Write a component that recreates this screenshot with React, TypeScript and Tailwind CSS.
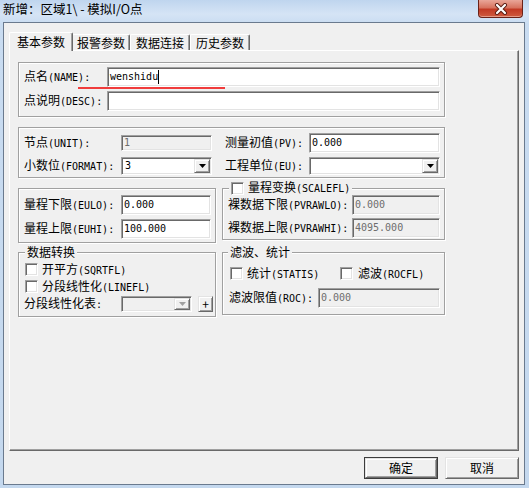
import { clsx as cn } from 'clsx';
import type { ReactNode } from 'react';

const sunken =
  'border border-t-[#a0a0a0] border-l-[#a0a0a0] border-r-white border-b-white shadow-[inset_1px_1px_0_#696969,inset_-1px_-1px_0_#e3e3e3]';
const raised =
  'border border-t-[#e3e3e3] border-l-[#e3e3e3] border-r-[#696969] border-b-[#696969] shadow-[inset_1px_1px_0_#fff,inset_-1px_-1px_0_#a0a0a0]';
const mono = "font-['DejaVu_Sans_Mono',monospace] text-[10px]";

function Label({ zh, en, className }: { zh: string; en: string; className?: string }) {
  return (
    <span className={cn('shrink-0 whitespace-nowrap leading-[16px]', className)}>
      {zh}
      <span className={mono}>{en}</span>
    </span>
  );
}

interface FieldProps {
  value?: string;
  disabled?: boolean;
  caret?: boolean;
  className?: string;
}

function Field({ value = '', disabled, caret, className }: FieldProps) {
  return (
    <div
      className={cn(
        sunken,
        'flex shrink-0 items-center overflow-hidden pl-[2px]',
        disabled ? 'bg-[#f0f0f0] text-[#6d6d6d]' : 'bg-white text-black',
        className
      )}
    >
      <span className={cn(mono, 'leading-[14px]')}>{value}</span>
      {caret && <span className="inline-block h-[14px] w-px bg-black" />}
    </div>
  );
}

function Combo({ value = '', disabled, className }: FieldProps) {
  return (
    <div className={cn(sunken, 'flex shrink-0 p-[1px]', disabled ? 'bg-[#f0f0f0]' : 'bg-white', className)}>
      <div className={cn(mono, 'flex flex-1 items-center pl-[2px] leading-[14px]')}>{value}</div>
      <div className={cn(raised, 'flex w-[16px] items-center justify-center bg-[#f0f0f0]')}>
        <svg width="7" height="4" viewBox="0 0 7 4">
          <path d="M0 0h7L3.5 4z" fill={disabled ? '#a0a0a0' : '#000'} />
        </svg>
      </div>
    </div>
  );
}

function Check() {
  return <span className={cn(sunken, 'inline-block h-[13px] w-[13px] shrink-0 bg-white')} />;
}

function Group({ legend, className, children }: { legend?: ReactNode; className?: string; children: ReactNode }) {
  return (
    <div className={cn('relative shrink-0 border border-[#a0a0a0] shadow-[inset_1px_1px_0_#fff,1px_1px_0_#fff]', className)}>
      {legend}
      {children}
    </div>
  );
}

function Tab({ label, active, className }: { label: string; active?: boolean; className?: string }) {
  return (
    <div
      className={cn(
        'flex items-center justify-center rounded-t-[2px] border-l border-r border-t border-l-white border-r-[#696969] border-t-white bg-[#f0f0f0] shadow-[inset_-1px_0_0_#a0a0a0]',
        active ? 'relative z-10 -mb-px h-[19px] pb-px' : 'h-[16px]',
        className
      )}
    >
      {label}
    </div>
  );
}

function Button({ label, primary }: { label: string; primary?: boolean }) {
  if (primary) {
    return (
      <div className="h-[22px] w-[74px] border border-[#3c3c3c]">
        <div className={cn(raised, 'flex h-full items-center justify-center bg-[#f0f0f0]')}>{label}</div>
      </div>
    );
  }
  return <div className={cn(raised, 'flex h-[22px] w-[74px] items-center justify-center bg-[#f0f0f0]')}>{label}</div>;
}

export default function App() {
  return (
    <div className="relative h-[488px] w-[529px] overflow-hidden bg-[linear-gradient(180deg,#bfd5ee_0px,#d5e4f5_14px,#c9dcf1_24px,#c4d8ee_100%)] font-['Noto_Sans_CJK_SC',sans-serif] text-[12px] text-black">
      {/* title bar */}
      <div className="flex h-[22px] items-start">
        <span className="pl-[3px] pt-[1px] text-[12.5px] leading-[16px]">新增：区域1\ - 模拟I/O点</span>
        <div className="ml-auto mr-[6px] flex h-[18px] w-[45px] items-center justify-center rounded-b-[4px] border border-t-0 border-[#6b2218] bg-[linear-gradient(180deg,#e9a698_0%,#d7735f_45%,#c23a24_55%,#cf5b40_100%)] shadow-[inset_0_-1px_0_#e59a86]">
          <svg width="14" height="12" viewBox="0 0 14 12">
            <path d="M3 2l8 8M11 2l-8 8" stroke="#5a1c12" strokeWidth="4" strokeLinecap="round" />
            <path d="M3 2l8 8M11 2l-8 8" stroke="#fff" strokeWidth="2.2" strokeLinecap="round" />
          </svg>
        </div>
      </div>

      {/* client area */}
      <div className="ml-[3px] h-[463px] w-[522px] border border-[#6a7a8e] bg-[#f0f0f0]">
        <div className="ml-[5px] mt-[9px] flex h-[18px] items-end">
          <Tab label="基本参数" active className="w-[64px]" />
          <Tab label="报警参数" className="-ml-px w-[58px]" />
          <Tab label="数据连接" className="w-[60px]" />
          <Tab label="历史参数" className="w-[60px]" />
        </div>

        <div className="ml-[5px] h-[401px] w-[510px] border border-b-[#696969] border-l-white border-r-[#696969] border-t-white pl-[8px] pt-[11px] shadow-[inset_-1px_-1px_0_#a0a0a0]">
          <Group className="flex h-[55px] w-[427px] flex-col gap-[4px] pl-[5px] pt-[4px]">
            <div className="flex h-[20px] items-center">
              <Label zh="点名" en="(NAME):" className="w-[83px]" />
              <Field value="wenshidu" caret className="h-[20px] w-[333px]" />
            </div>
            <div className="flex h-[20px] items-center">
              <Label zh="点说明" en="(DESC):" className="w-[83px]" />
              <Field className="h-[20px] w-[333px]" />
            </div>
          </Group>

          <Group className="mt-[10px] flex h-[51px] w-[427px] flex-col gap-[4px] pl-[5px] pt-[5px]">
            <div className="flex h-[20px] items-center">
              <Label zh="节点" en="(UNIT):" className="w-[97px]" />
              <Field value="1" disabled className="h-[16px] w-[91px]" />
              <Label zh="测量初值" en="(PV):" className="ml-[13px] w-[84px]" />
              <Field value="0.000" className="h-[20px] w-[131px]" />
            </div>
            <div className="flex h-[18px] items-center">
              <Label zh="小数位" en="(FORMAT):" className="w-[97px]" />
              <Combo value="3" className="h-[18px] w-[91px]" />
              <Label zh="工程单位" en="(EU):" className="ml-[13px] w-[84px]" />
              <Combo className="h-[18px] w-[131px]" />
            </div>
          </Group>

          <div className="mt-[10px] flex items-start gap-[6px]">
            <Group className="flex h-[55px] w-[198px] flex-col gap-[4px] pl-[5px] pt-[6px]">
              <div className="flex h-[20px] items-center">
                <Label zh="量程下限" en="(EULO):" className="w-[97px]" />
                <Field value="0.000" className="h-[20px] w-[90px]" />
              </div>
              <div className="flex h-[20px] items-center">
                <Label zh="量程上限" en="(EUHI):" className="w-[97px]" />
                <Field value="100.000" className="h-[20px] w-[90px]" />
              </div>
            </Group>

            <Group
              className="flex h-[52px] w-[223px] flex-col gap-[3px] pl-[5px] pt-[6px]"
              legend={
                <div className="absolute left-[6px] top-[-9px] flex h-[16px] items-center gap-[4px] bg-[#f0f0f0] px-[2px]">
                  <Check />
                  <Label zh="量程变换" en="(SCALEFL)" />
                </div>
              }
            >
              <div className="flex h-[20px] items-center">
                <Label zh="裸数据下限" en="(PVRAWLO):" className="w-[124px]" />
                <Field value="0.000" disabled className="h-[20px] w-[88px]" />
              </div>
              <div className="flex h-[20px] items-center">
                <Label zh="裸数据上限" en="(PVRAWHI):" className="w-[124px]" />
                <Field value="4095.000" disabled className="h-[20px] w-[88px]" />
              </div>
            </Group>
          </div>

          <div className="mt-[9px] flex items-start gap-[6px]">
            <Group
              className="h-[65px] w-[198px] pl-[5px] pt-[10px]"
              legend={<div className="absolute left-[6px] top-[-9px] bg-[#f0f0f0] px-[2px] leading-[16px]">数据转换</div>}
            >
              <div className="ml-px flex h-[13px] items-center gap-[4px]">
                <Check />
                <Label zh="开平方" en="(SQRTFL)" />
              </div>
              <div className="ml-px mt-[4px] flex h-[13px] items-center gap-[4px]">
                <Check />
                <Label zh="分段线性化" en="(LINEFL)" />
              </div>
              <div className="mt-[3px] flex h-[16px] items-center">
                <Label zh="分段线性化表" en=":" className="w-[97px]" />
                <Combo disabled className="h-[16px] w-[71px]" />
                <div className={cn(raised, 'ml-[6px] flex h-[16px] w-[15px] items-center justify-center bg-[#f0f0f0] text-[12px] leading-none')}>+</div>
              </div>
            </Group>

            <Group
              className="h-[63px] w-[223px] pl-[7px] pt-[14px]"
              legend={<div className="absolute left-[5px] top-[-9px] bg-[#f0f0f0] px-[2px] leading-[16px]">滤波、统计</div>}
            >
              <div className="flex h-[13px] items-center">
                <div className="flex w-[110px] items-center gap-[4px]">
                  <Check />
                  <Label zh="统计" en="(STATIS)" />
                </div>
                <div className="flex items-center gap-[5px]">
                  <Check />
                  <Label zh="滤波" en="(ROCFL)" />
                </div>
              </div>
              <div className="-ml-px mt-[8px] flex h-[20px] items-center">
                <Label zh="滤波限值" en="(ROC):" className="w-[89px]" />
                <Field value="0.000" disabled className="h-[20px] w-[122px]" />
              </div>
            </Group>
          </div>
        </div>

        <div className="ml-[5px] mt-[6px] flex w-[510px] justify-end gap-[7px] text-[12px]">
          <Button label="确定" primary />
          <Button label="取消" />
        </div>
      </div>

      {/* red annotation under the name field */}
      <div className="absolute left-[78px] top-[87px] h-[2px] w-[147px] bg-[#f03c3c]" />
    </div>
  );
}
